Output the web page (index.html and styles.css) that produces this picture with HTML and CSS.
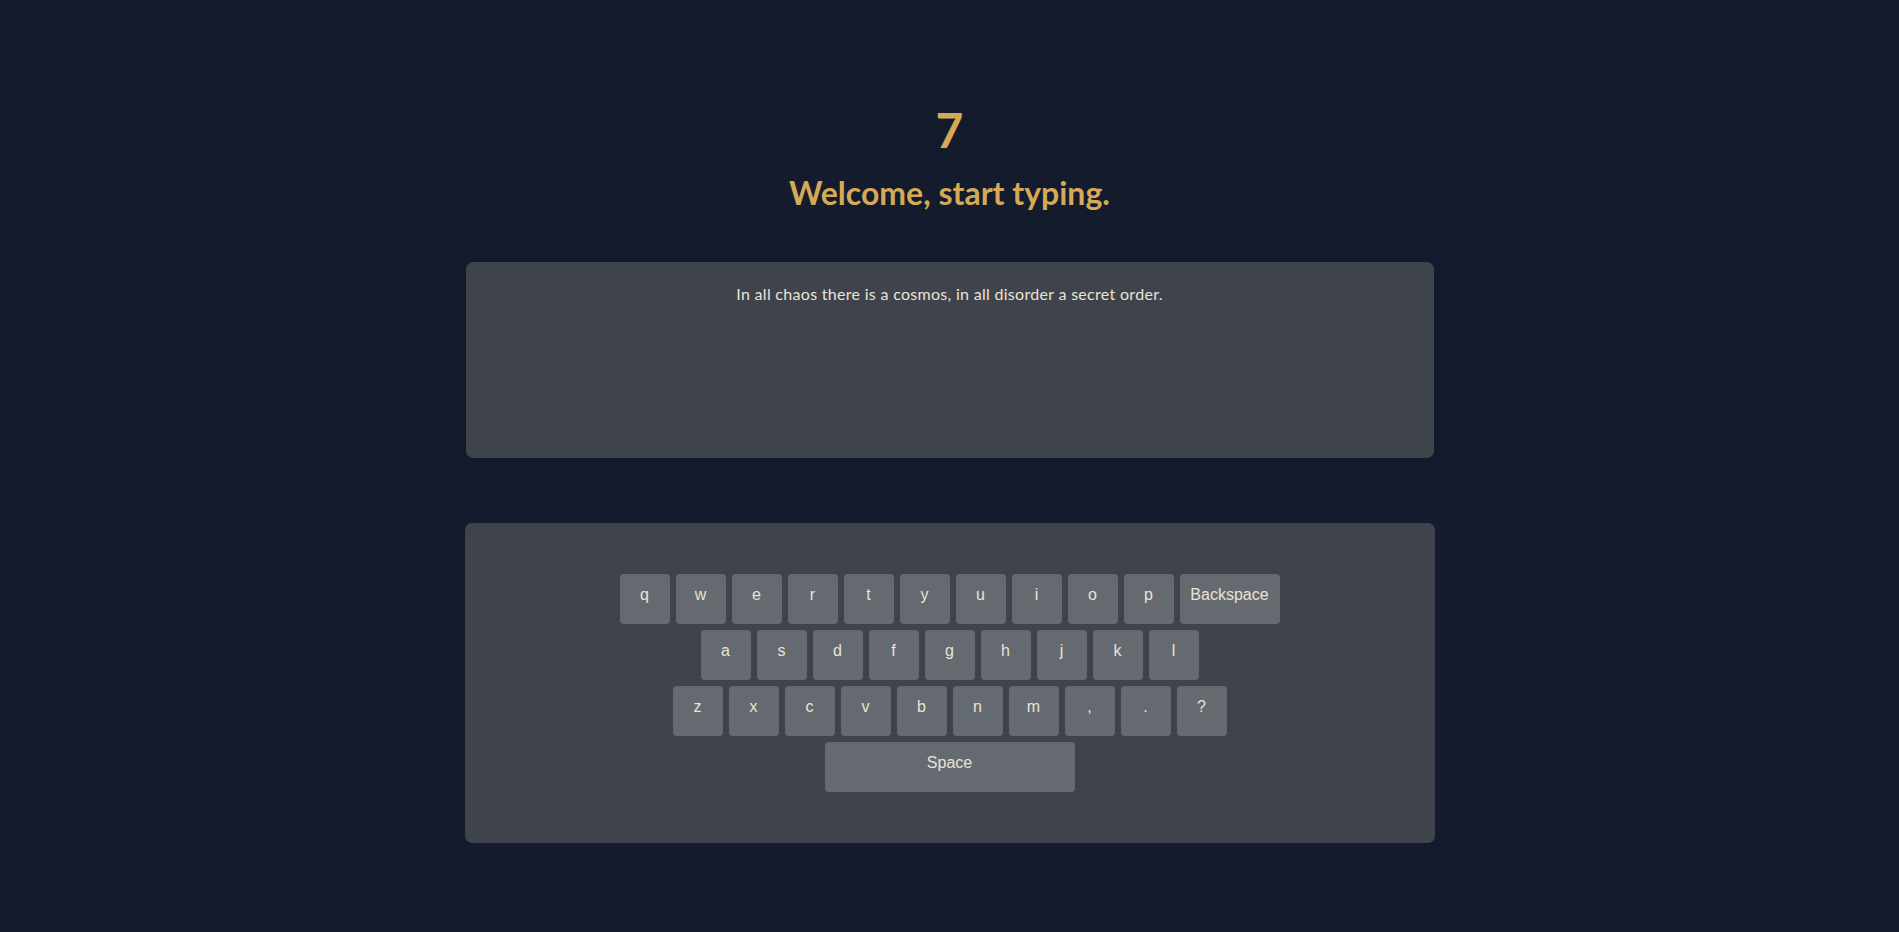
FILE: index.html
```html
<!DOCTYPE html>
<html>
<head>
<meta charset="utf-8">
<link rel="stylesheet" href="styles.css">
</head>
<body>
<main class="page">
  <div class="counter">7</div>
  <h1 class="title">Welcome, start typing.</h1>
  <section class="prompt">
    <p class="prompt-text">In all chaos there is a cosmos, in all disorder a secret order.</p>
  </section>
  <section class="keyboard">
    <div class="row">
      <div class="key">q</div><div class="key">w</div><div class="key">e</div><div class="key">r</div><div class="key">t</div><div class="key">y</div><div class="key">u</div><div class="key">i</div><div class="key">o</div><div class="key">p</div><div class="key key-wide">Backspace</div>
    </div>
    <div class="row">
      <div class="key">a</div><div class="key">s</div><div class="key">d</div><div class="key">f</div><div class="key">g</div><div class="key">h</div><div class="key">j</div><div class="key">k</div><div class="key">l</div>
    </div>
    <div class="row">
      <div class="key">z</div><div class="key">x</div><div class="key">c</div><div class="key">v</div><div class="key">b</div><div class="key">n</div><div class="key">m</div><div class="key">,</div><div class="key">.</div><div class="key">?</div>
    </div>
    <div class="row">
      <div class="key key-space">Space</div>
    </div>
  </section>
</main>
</body>
</html>
```
FILE: styles.css
```css
html, body {
  margin: 0;
  padding: 0;
  background: #131b2d;
  height: 100%;
}
.page {
  display: flex;
  flex-direction: column;
  align-items: center;
  padding-top: 102px;
  font-family: "Lato", "Noto Sans", sans-serif;
}
.counter {
  color: #d5a957;
  font-size: 48px;
  line-height: 56px;
  font-weight: 700;
}
.title {
  margin: 15px 0 0;
  color: #d5a957;
  font-size: 32px;
  line-height: 40px;
  font-weight: 700;
}
.prompt {
  margin-top: 49px;
  width: 968px;
  height: 196px;
  box-sizing: border-box;
  background: #3f434c;
  border-radius: 7px;
  padding-top: 22px;
  display: flex;
  justify-content: center;
}
.prompt-text {
  margin: 0;
  color: #e8e4d8;
  font-size: 16px;
  line-height: 20px;
  letter-spacing: 0.3px;
}
.keyboard {
  margin-top: 65px;
  width: 970px;
  height: 320px;
  box-sizing: border-box;
  padding: 48px 0;
  background: #3f434c;
  border-radius: 7px;
  display: flex;
  flex-direction: column;
  align-items: center;
}
.row {
  display: flex;
  justify-content: center;
}
.key {
  width: 50px;
  height: 50px;
  margin: 3px;
  box-sizing: border-box;
  background: #656970;
  border-radius: 4px;
  color: #e8e4d8;
  font-family: "Liberation Sans", Arial, sans-serif;
  font-size: 16px;
  line-height: 20px;
  padding-top: 11px;
  text-align: center;
}
.key-wide {
  width: 100px;
}
.key-space {
  width: 250px;
}
```
